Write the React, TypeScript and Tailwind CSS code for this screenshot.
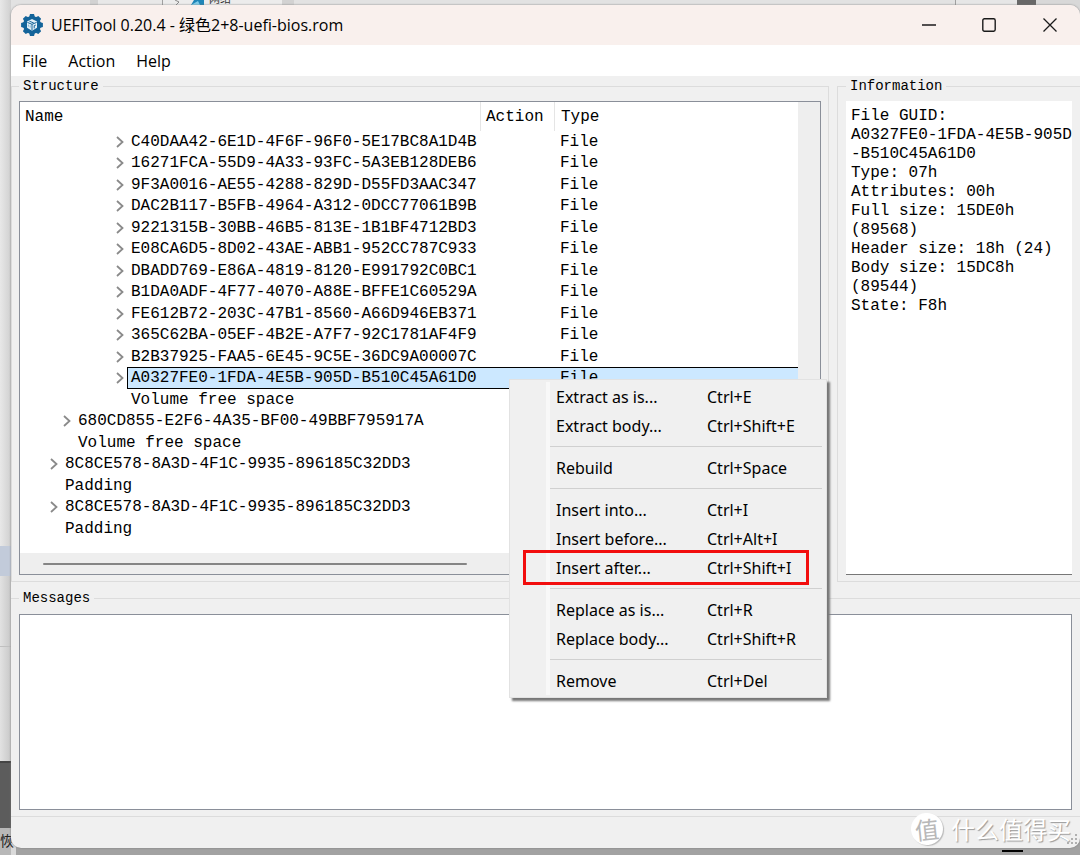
import React, { useState } from 'react';
import clsx from 'clsx';

interface TreeItem {
  name: string;
  level: 1 | 2 | 5;
  type: string;
  expandable: boolean;
}

interface MenuEntry {
  label: string;
  shortcut: string;
}

const treeItems: TreeItem[] = [
  { name: 'C40DAA42-6E1D-4F6F-96F0-5E17BC8A1D4B', level: 5, type: 'File', expandable: true },
  { name: '16271FCA-55D9-4A33-93FC-5A3EB128DEB6', level: 5, type: 'File', expandable: true },
  { name: '9F3A0016-AE55-4288-829D-D55FD3AAC347', level: 5, type: 'File', expandable: true },
  { name: 'DAC2B117-B5FB-4964-A312-0DCC77061B9B', level: 5, type: 'File', expandable: true },
  { name: '9221315B-30BB-46B5-813E-1B1BF4712BD3', level: 5, type: 'File', expandable: true },
  { name: 'E08CA6D5-8D02-43AE-ABB1-952CC787C933', level: 5, type: 'File', expandable: true },
  { name: 'DBADD769-E86A-4819-8120-E991792C0BC1', level: 5, type: 'File', expandable: true },
  { name: 'B1DA0ADF-4F77-4070-A88E-BFFE1C60529A', level: 5, type: 'File', expandable: true },
  { name: 'FE612B72-203C-47B1-8560-A66D946EB371', level: 5, type: 'File', expandable: true },
  { name: '365C62BA-05EF-4B2E-A7F7-92C1781AF4F9', level: 5, type: 'File', expandable: true },
  { name: 'B2B37925-FAA5-6E45-9C5E-36DC9A00007C', level: 5, type: 'File', expandable: true },
  { name: 'A0327FE0-1FDA-4E5B-905D-B510C45A61D0', level: 5, type: 'File', expandable: true },
  { name: 'Volume free space', level: 5, type: '', expandable: false },
  { name: '680CD855-E2F6-4A35-BF00-49BBF795917A', level: 2, type: '', expandable: true },
  { name: 'Volume free space', level: 2, type: '', expandable: false },
  { name: '8C8CE578-8A3D-4F1C-9935-896185C32DD3', level: 1, type: '', expandable: true },
  { name: 'Padding', level: 1, type: '', expandable: false },
  { name: '8C8CE578-8A3D-4F1C-9935-896185C32DD3', level: 1, type: '', expandable: true },
  { name: 'Padding', level: 1, type: '', expandable: false },
];

const indents = {
  1: 'pl-[21px]',
  2: 'pl-[34px]',
  5: 'pl-[87px]',
};

const infoLines = [
  'File GUID:',
  'A0327FE0-1FDA-4E5B-905D',
  '-B510C45A61D0',
  'Type: 07h',
  'Attributes: 00h',
  'Full size: 15DE0h',
  '(89568)',
  'Header size: 18h (24)',
  'Body size: 15DC8h',
  '(89544)',
  'State: F8h',
];

const menuGroups: MenuEntry[][] = [
  [
    { label: 'Extract as is...', shortcut: 'Ctrl+E' },
    { label: 'Extract body...', shortcut: 'Ctrl+Shift+E' },
  ],
  [{ label: 'Rebuild', shortcut: 'Ctrl+Space' }],
  [
    { label: 'Insert into...', shortcut: 'Ctrl+I' },
    { label: 'Insert before...', shortcut: 'Ctrl+Alt+I' },
    { label: 'Insert after...', shortcut: 'Ctrl+Shift+I' },
  ],
  [
    { label: 'Replace as is...', shortcut: 'Ctrl+R' },
    { label: 'Replace body...', shortcut: 'Ctrl+Shift+R' },
  ],
  [{ label: 'Remove', shortcut: 'Ctrl+Del' }],
];

const GearIcon = () => (
  <svg viewBox="0 0 22 22" className="size-[22px]" aria-hidden="true">
    <g fill="#14649a">
      <circle cx="11" cy="11" r="9" />
      {[0, 45, 90, 135, 180, 225, 270, 315].map((angle) => (
        <path key={angle} d="M8 3.4 9 0.1h4L14 3.4z" transform={`rotate(${angle} 11 11)`} />
      ))}
    </g>
    <path d="M11 5 16 7.4v6.4L11 16.8 6 13.8V7.4z" fill="#e4f0f7" />
    <path d="M6.4 8.4 11 10.3l4.6-1.9M11 10.3v6M8.4 7.2l4.4 1.8M13.2 11.6v2.8M13.2 11.8l1.6-.8" fill="none" stroke="#14649a" strokeWidth="1" />
    <path d="M7.4 10.6v2M9.2 11.4v2.2" fill="none" stroke="#5a9cc4" strokeWidth="0.7" />
  </svg>
);

// Bits of the windows that show from behind the main window
const Desktop = () => (
  <div className="absolute inset-0 overflow-hidden bg-[#dadada]" aria-hidden="true">
    <div className="absolute inset-x-0 top-0 flex h-4 bg-[#e2e2e2]">
      <div className="w-[90px]" />
      <div className="w-2 bg-[#d2d2d2]" />
      <div className="w-16 bg-[#e8e8e8]" />
      <div className="w-[120px] border-l border-[#a0a0a0] bg-[#ececec]" />
      <div className="w-3 bg-[#d2d2d2]" />
      <div className="flex-1" />
      <div className="w-[62px] border-l border-[#a0a0a0] bg-[#e6e6e6]" />
      <div className="w-[19px] bg-[#686868]" />
      <div className="w-11 bg-[#d8d8d8]" />
    </div>
    <svg viewBox="0 0 60 5" className="absolute left-[174px] top-0 h-[5px] w-[60px]">
      <path d="M1 0l4 2-3 3" fill="none" stroke="#888" />
      <path d="M20 0h10v5H17z" fill="#1f86b8" />
      <path d="M17 5l7-4 2 4z" fill="#7fcdea" />
    </svg>
    <span className="absolute -top-[10px] left-[209px] font-['Noto_Sans_CJK_SC',sans-serif] text-[11px] leading-4 text-[#333]">网络</span>
    <div className="absolute bottom-0 left-0 top-0 flex w-[11px] flex-col bg-[#dcdcdc]">
      <div className="h-[546px] bg-linear-to-r from-[#e8e8e8] to-[#d0d0d0]" />
      <div className="h-[30px] bg-[#c2cbda]" />
      <div className="h-[70px] bg-linear-to-r from-[#e2e2e2] to-[#c8c8c8]" />
      <div className="h-[115px] border-t border-[#c0c0c0] bg-linear-to-r from-[#e2e2e2] to-[#c8c8c8]" />
      <div className="h-[67px] border-t-2 border-[#444] bg-[#5c5c5c]" />
      <div className="flex-1 bg-[#b8b8b8]" />
    </div>
    <div className="absolute bottom-0 left-4 right-0 h-4 bg-[#a2a2a2]" />
    <span className="absolute bottom-[3px] left-0 font-['Noto_Sans_CJK_SC',sans-serif] text-sm leading-6 text-[#222]">恢</span>
    <div className="absolute bottom-[3px] right-[57px] h-[2px] w-[21px] bg-black" />
  </div>
);

const TitleBar = () => (
  <header className="flex h-10 items-center bg-[#f9f0ed] pl-[10px]">
    <GearIcon />
    <h1 className="ml-2 flex-1 font-['Open_Sans','Noto_Sans_CJK_SC',sans-serif] text-base leading-6">
      UEFITool 0.20.4 - 绿色2+8-uefi-bios.rom
    </h1>
    <div className="flex h-full">
      <button aria-label="Minimize" className="flex w-[60px] items-center justify-center">
        <svg viewBox="0 0 14 14" className="size-[14px]" fill="none" stroke="#1a1a1a" strokeWidth="1.4"><path d="M0 7h14" /></svg>
      </button>
      <button aria-label="Maximize" className="flex w-[60px] items-center justify-center">
        <svg viewBox="0 0 14 14" className="size-[14px]" fill="none" stroke="#1a1a1a" strokeWidth="1.4"><rect x="0.8" y="0.8" width="12.4" height="12.4" rx="1.6" /></svg>
      </button>
      <button aria-label="Close" className="flex w-[61px] items-center justify-center">
        <svg viewBox="0 0 14 14" className="size-[14px]" fill="none" stroke="#1a1a1a" strokeWidth="1.3"><path d="M0.5 0.5l13 13M13.5 0.5l-13 13" /></svg>
      </button>
    </div>
  </header>
);

const groupLegend = "px-1 font-['Liberation_Mono',monospace] text-sm leading-5";

const StructureTree = ({ selected, onSelect }: { selected: number; onSelect: (index: number) => void }) => (
  <div className="flex flex-1 flex-col border border-[#8a8f99] bg-white">
    <div className="flex">
      <table className="flex-1 text-left font-['Liberation_Mono',monospace] text-base leading-5">
        <thead>
          <tr className="flex h-[29px] items-stretch">
            <th className="w-[461px] border-r border-[#e5e5e5] pl-[5px] pt-[5px] font-normal">Name</th>
            <th className="w-[74px] border-r border-[#e5e5e5] pl-[5px] pt-[5px] font-normal">Action</th>
            <th className="pl-[6px] pt-[5px] font-normal">Type</th>
          </tr>
        </thead>
        <tbody>
          {treeItems.map((item, index) => {
            const isSelected = index === selected;
            const cell = isSelected ? 'border-y border-black bg-[#cce8ff]' : 'border-y border-transparent';
            return (
              <tr key={index} onClick={() => onSelect(index)} className="flex odd:h-[21px] even:h-[22px]">
                <td className={clsx('flex w-[461px]', indents[item.level])}>
                  <span className="flex w-5 items-center justify-end pr-[3px]">
                    {item.expandable && (
                      <button aria-label={`Expand ${item.name}`}>
                        <svg viewBox="0 0 8 12" className="h-3 w-2" fill="none" stroke="#8a8a8a" strokeWidth="1.8"><path d="M1 1l5.5 5L1 11" /></svg>
                      </button>
                    )}
                  </span>
                  <span className={clsx('flex-1 border-l pl-[3px]', cell)}>{item.name}</span>
                </td>
                <td className={clsx('w-[74px]', cell)}></td>
                <td className={clsx('flex-1 pl-[5px]', cell)}>{item.type}</td>
              </tr>
            );
          })}
        </tbody>
      </table>
      <div className="w-[22px] bg-[#eeeeee]" />
    </div>
    <div className="h-[14px]" />
    <div className="flex h-[21px] items-center bg-[#eeeeee] pl-[23px]">
      <div className="h-[2px] w-[424px] rounded bg-[#858585]" />
    </div>
  </div>
);

const ContextMenu = () => (
  <div
    role="menu"
    className="absolute left-[498px] top-[374px] w-[318px] border border-[#e2e2e2] bg-[#f0f0f0] py-[2px] font-['Noto_Sans',sans-serif] text-base shadow-[3px_3px_2px_#777]"
  >
    <div className="absolute inset-y-[2px] left-9 w-1 bg-[#f8f8f8]" />
    {menuGroups.map((group, groupIndex) => (
      <div key={groupIndex}>
        {groupIndex > 0 && (
          <div className="flex h-[13px] items-center pl-10 pr-1">
            <div className="h-px flex-1 bg-[#d0d0d0]" />
          </div>
        )}
        {group.map((entry) => (
          <button key={entry.label} role="menuitem" className="relative flex h-[29px] w-full items-center pl-[46px] text-left">
            <span className="w-[151px]">{entry.label}</span>
            <span>{entry.shortcut}</span>
            {entry.label === 'Insert after...' && (
              <span className="absolute -inset-y-[3px] left-[13px] right-[17px] border-[3px] border-[#f20d0d]" />
            )}
          </button>
        ))}
      </div>
    ))}
  </div>
);

const StatusBar = () => (
  <footer className="flex h-8 items-center justify-end border-t border-[#dcdcdc] pb-2 pr-[9px]">
    <div className="flex items-center gap-2 font-['Noto_Sans_CJK_SC',sans-serif] text-white">
      <span className="flex size-8 -rotate-6 items-center justify-center rounded-full bg-white text-2xl leading-8 text-[#b8b8b8] shadow-[1px_1px_1px_#bbb]">
        值
      </span>
      <span className="text-2xl leading-8 [text-shadow:1px_1px_1px_#999]">什么值得买</span>
    </div>
    <svg viewBox="0 0 11 11" className="absolute bottom-[3px] right-[2px] size-[11px]" fill="#b0b0b0" aria-hidden="true">
      <path d="M8 0h2v2H8zM4 4h2v2H4zM8 4h2v2H8zM0 8h2v2H0zM4 8h2v2H4zM8 8h2v2H8z" />
    </svg>
  </footer>
);

const App: React.FC = () => {
  const [selected, setSelected] = useState<number>(11);

  return (
    <div className="relative flex min-h-screen flex-col pb-[7px] pl-[11px] pt-[5px] text-black">
      <Desktop />
      <div className="relative flex flex-1 flex-col">
        <div className="flex flex-1 flex-col rounded-[10px] bg-[#f0f0f0] shadow-[0_0_2px_#777]">
          <div className="overflow-hidden rounded-t-[10px]">
            <TitleBar />
            <nav className="flex h-[31px] items-center gap-[21px] bg-white pl-[11px] font-['Open_Sans',sans-serif] text-base">
              <button>File</button>
              <button>Action</button>
              <button>Help</button>
            </nav>
          </div>
          <main className="flex flex-1 flex-col gap-[6px]">
            <div className="flex gap-2">
              <fieldset className="flex min-w-0 flex-1 border border-[#dcdcdc] px-[7px] pb-[6px] pt-[5px]">
                <legend className={groupLegend}>Structure</legend>
                <StructureTree selected={selected} onSelect={setSelected} />
              </fieldset>
              <fieldset className="flex w-[243px] border border-r-0 border-[#dcdcdc] px-2 pb-[6px] pt-[5px]">
                <legend className={groupLegend}>Information</legend>
                <div className="flex-1 whitespace-pre border-b border-[#777] bg-white pl-[5px] pt-[6px] font-['Liberation_Mono',monospace] text-base leading-[19px]">
                  {infoLines.map((line) => (
                    <p key={line}>{line}</p>
                  ))}
                </div>
              </fieldset>
            </div>
            <fieldset className="flex flex-1 border-t border-[#dcdcdc] px-2 pt-[6px]">
              <legend className={groupLegend}>Messages</legend>
              <div className="min-h-[196px] flex-1 border border-[#8a8f99] bg-white" />
            </fieldset>
          </main>
          <StatusBar />
        </div>
        <ContextMenu />
      </div>
    </div>
  );
};

export default App;
